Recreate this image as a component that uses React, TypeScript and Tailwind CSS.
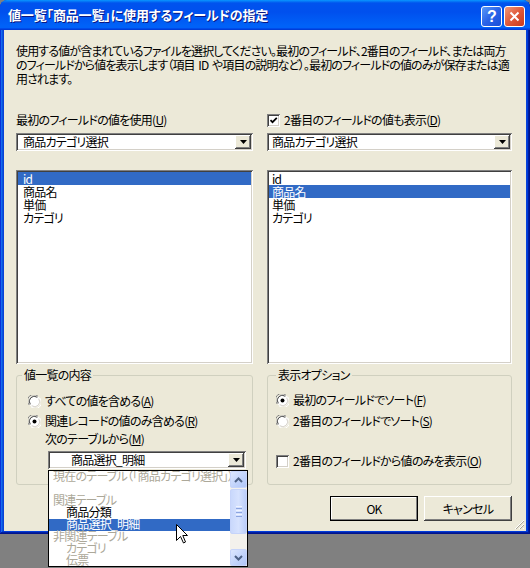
import React from "react";

const SUNKEN =
  "shadow-[inset_1px_1px_0_#808080,inset_-1px_-1px_0_#ffffff,inset_2px_2px_0_#404040,inset_-2px_-2px_0_#d4d0c8]";
const RAISED =
  "shadow-[inset_-1px_-1px_0_#404040,inset_1px_1px_0_#ffffff,inset_-2px_-2px_0_#808080,inset_2px_2px_0_#ece9d8]";

function DropBtn() {
  return (
    <div className={`mr-[2px] w-[16px] h-[14px] shrink-0 bg-[#ece9d8] ${RAISED} flex items-center justify-center`}>
      <svg width="7" height="4" viewBox="0 0 7 4">
        <path d="M0 0H7L3.5 4Z" fill="#000" />
      </svg>
    </div>
  );
}

function Combo({ text, padClass, className }: { text: string; padClass: string; className?: string }) {
  return (
    <div className={`h-[18px] bg-white flex items-center ${SUNKEN} ${className ?? ""}`}>
      <span className={`flex-1 ${padClass} text-[12px] leading-[14px] whitespace-nowrap`}>{text}</span>
      <DropBtn />
    </div>
  );
}

function ListBox({ items, sel, padClass }: { items: string[]; sel: number; padClass: string }) {
  return (
    <div className={`h-[194px] bg-white ${SUNKEN} p-[2px]`}>
      {items.map((it, i) => (
        <div
          key={it}
          className={`h-[13px] leading-[13px] text-[12px] whitespace-nowrap ${padClass} ${
            i === sel ? "bg-[#316ac5] text-white" : "text-black"
          }`}
        >
          {it}
        </div>
      ))}
    </div>
  );
}

function Radio({ checked }: { checked?: boolean }) {
  return (
    <svg width="13" height="13" viewBox="0 0 13 13" className="shrink-0">
      <circle cx="6.5" cy="6.5" r="6" fill="#ffffff" />
      <path d="M1.3 10 A6 6 0 0 1 10 1.3" fill="none" stroke="#808080" strokeWidth="1" />
      <path d="M2.3 9.3 A5 5 0 0 1 9.3 2.3" fill="none" stroke="#404040" strokeWidth="1" />
      <path d="M11.7 3 A6 6 0 0 1 3 11.7" fill="none" stroke="#ffffff" strokeWidth="1" />
      <path d="M10.7 3.7 A5 5 0 0 1 3.7 10.7" fill="none" stroke="#d4d0c8" strokeWidth="1" />
      {checked && <circle cx="6.5" cy="6.5" r="2" fill="#000000" />}
    </svg>
  );
}

function Check({ checked }: { checked?: boolean }) {
  return (
    <div className={`w-[13px] h-[13px] shrink-0 bg-white ${SUNKEN} flex items-center justify-center`}>
      {checked && (
        <svg width="9" height="9" viewBox="0 0 9 9">
          <path d="M1.5 4.2 L3.5 6.2 L7.8 1.8" fill="none" stroke="#000" strokeWidth="1.7" />
        </svg>
      )}
    </div>
  );
}

function UL({ k }: { k: string }) {
  return (
    <>
      (<span className="underline">{k}</span>)
    </>
  );
}

function Button({ children, def }: { children: React.ReactNode; def?: boolean }) {
  return (
    <div
      className={`w-[88px] h-[25px] bg-[#ece9d8] flex items-center justify-center text-[12px] ${
        def
          ? "border border-black shadow-[inset_-1px_-1px_0_#808080,inset_1px_1px_0_#ffffff]"
          : RAISED
      }`}
    >
      {children}
    </div>
  );
}

function TitleBar() {
  return (
    <div className="h-[30px] shrink-0 flex items-center rounded-t-[7px] bg-[linear-gradient(180deg,#0997ff_0%,#0053ee_10%,#0050ee_40%,#0062f8_85%,#0062f8_92%,#005bff_94%,#003dd7_96%,#003dd7_100%)]">
      <div className="pl-[8px] flex-1 text-white font-bold text-[13px] tracking-[-0.15px] whitespace-nowrap [text-shadow:1px_1px_0_#0a1883]">
        値一覧「商品一覧」に使用するフィールドの指定
      </div>
      <div className="flex gap-[2px] pr-[5px] pt-[3px]">
        <div className="w-[21px] h-[21px] rounded-[3px] border border-white bg-[linear-gradient(135deg,#5a9af8,#2a63e8_50%,#1a4ed8)] flex items-center justify-center text-white font-bold text-[16px] leading-none font-['Liberation_Sans',sans-serif]">
          ?
        </div>
        <div className="w-[21px] h-[21px] rounded-[3px] border border-white bg-[linear-gradient(135deg,#f09878,#e0593a_50%,#c8391b)] flex items-center justify-center">
          <svg width="11" height="11" viewBox="0 0 11 11">
            <path d="M1.5 1.5 L9.5 9.5 M9.5 1.5 L1.5 9.5" stroke="#ffffff" strokeWidth="2" />
          </svg>
        </div>
      </div>
    </div>
  );
}

function ScrollBtn({ up }: { up?: boolean }) {
  return (
    <div className="w-[17px] h-[17px] shrink-0 rounded-[2px] border border-[#c6d4fa] bg-[linear-gradient(135deg,#dde7fe,#c0d2fb_60%,#b0c6f7)] flex items-center justify-center">
      <svg width="9" height="6" viewBox="0 0 9 6">
        <path d={up ? "M1 5 L4.5 1.5 L8 5" : "M1 1 L4.5 4.5 L8 1"} fill="none" stroke="#4d6185" strokeWidth="2" />
      </svg>
    </div>
  );
}

function Popup() {
  const rows: { t: string; kind: "gray" | "grayIn" | "black" | "sel" | "blank" }[] = [
    { t: "現在のテーブル（「商品カテゴリ選択」）", kind: "gray" },
    { t: "", kind: "blank" },
    { t: "関連テーブル", kind: "gray" },
    { t: "商品分類", kind: "black" },
    { t: "商品選択_明細", kind: "sel" },
    { t: "非関連テーブル", kind: "gray" },
    { t: "カテゴリ", kind: "grayIn" },
    { t: "伝票", kind: "grayIn" },
  ];
  return (
    <div className="absolute left-[48px] top-[470px] w-[200px] h-[97px] bg-white border border-black flex">
      <div className="w-[181px] flex flex-col overflow-hidden">
        {rows.map((r, i) => (
          <div
            key={i}
            className={`h-[12px] shrink-0 leading-[10px] text-[12px] whitespace-nowrap ${
              r.kind === "gray"
                ? "pl-[4px] text-[#aca899]"
                : r.kind === "grayIn"
                ? "pl-[17px] text-[#aca899]"
                : r.kind === "black"
                ? "pl-[17px] text-black"
                : r.kind === "sel"
                ? "pl-[17px] text-white bg-[#316ac5]"
                : ""
            }`}
          >
            {r.t}
          </div>
        ))}
      </div>
      <div className="w-[17px] flex flex-col bg-[#f3f1ec]">
        <ScrollBtn up />
        <div className="mt-[1px] h-[45px] rounded-[2px] border border-[#c6d4fa] bg-[linear-gradient(90deg,#c9d8fc,#d6e2fe_50%,#bccefa)] flex flex-col items-center justify-center gap-[1px]">
          <div className="w-[6px] h-[1px] bg-[#eef3ff]" />
          <div className="w-[6px] h-[1px] bg-[#8ca5e0]" />
          <div className="w-[6px] h-[1px] bg-[#eef3ff]" />
          <div className="w-[6px] h-[1px] bg-[#8ca5e0]" />
          <div className="w-[6px] h-[1px] bg-[#eef3ff]" />
          <div className="w-[6px] h-[1px] bg-[#8ca5e0]" />
        </div>
        <div className="flex-1" />
        <ScrollBtn />
      </div>
    </div>
  );
}

export default function App() {
  return (
    <div className="w-[530px] h-[568px] bg-[#808080] overflow-hidden relative font-['Noto_Sans_CJK_JP','Noto_Sans',sans-serif] [font-feature-settings:'palt'] tracking-[-0.75px] text-black">
      <div className="w-[530px] h-[534px] flex flex-col rounded-t-[8px] bg-[#0842d8] shadow-[inset_-1px_-1px_0_#00138c,inset_1px_1px_0_#0831d9,inset_-2px_-2px_0_#001ea0,inset_2px_2px_0_#166aee,inset_-3px_-3px_0_#003bda,inset_3px_3px_0_#0855dd]">
        <TitleBar />
        <div className="flex-1 mx-[4px] mb-[3px] bg-[#ece9d8] relative flex flex-col pl-[12px] pr-[14px] text-[12px]">
          {/* description */}
          <div className="pt-[14px] leading-[14px] whitespace-pre tracking-[-0.87px]">
            <div>使用する値が含まれているファイルを選択してください。最初のフィールド、2番目のフィールド、または両方</div>
            <div>のフィールドから値を表示します（項目  ID  や項目の説明など）。最初のフィールドの値のみが保存または適</div>
            <div>用されます。</div>
          </div>

          {/* two columns */}
          <div className="mt-[27px] flex gap-[14px]">
            <div className="w-[237px] flex flex-col">
              <div className="h-[14px] leading-[14px] whitespace-nowrap">
                最初のフィールドの値を使用<UL k="U" />
              </div>
              <Combo text="商品カテゴリ選択" padClass="pl-[7px]" className="mt-[6px]" />
              <div className="mt-[19px]">
                <ListBox items={["id", "商品名", "単価", "カテゴリ"]} sel={0} padClass="pl-[5px]" />
              </div>
            </div>
            <div className="w-[245px] flex flex-col">
              <div className="h-[14px] flex items-center gap-[4px] whitespace-nowrap">
                <Check checked />
                <span className="leading-[14px]">
                  2番目のフィールドの値も表示<UL k="D" />
                </span>
              </div>
              <Combo text="商品カテゴリ選択" padClass="pl-[5px]" className="mt-[6px]" />
              <div className="mt-[19px]">
                <ListBox items={["id", "商品名", "単価", "カテゴリ"]} sel={1} padClass="pl-[3px]" />
              </div>
            </div>
          </div>

          {/* group boxes */}
          <div className="mt-[11px] flex gap-[14px]">
            <div className="relative w-[237px] h-[110px] border border-[#d0d0bf] rounded-[3px] flex flex-col">
              <span className="absolute left-[5px] top-[-8px] px-[2px] bg-[#ece9d8] leading-[14px] whitespace-nowrap">
                値一覧の内容
              </span>
              <div className="pt-[18px] pl-[11px] flex flex-col">
                <div className="h-[14px] flex items-center gap-[4px] whitespace-nowrap">
                  <Radio />
                  <span>
                    すべての値を含める<UL k="A" />
                  </span>
                </div>
                <div className="mt-[6px] h-[14px] flex items-center gap-[4px] whitespace-nowrap">
                  <Radio checked />
                  <span>
                    関連レコードの値のみ含める<UL k="R" />
                  </span>
                </div>
                <div className="mt-[4px] h-[14px] leading-[14px] pl-[17px] whitespace-nowrap">
                  次のテーブルから<UL k="M" />
                </div>
              </div>
              <Combo text="商品選択_明細" padClass="pl-[23px]" className="mt-[5px] ml-[31px] w-[198px]" />
            </div>
            <div className="relative w-[245px] h-[110px] border border-[#d0d0bf] rounded-[3px] flex flex-col">
              <span className="absolute left-[8px] top-[-8px] px-[2px] bg-[#ece9d8] leading-[14px] whitespace-nowrap">
                表示オプション
              </span>
              <div className="pt-[17px] pl-[8px] flex flex-col">
                <div className="h-[14px] flex items-center gap-[4px] whitespace-nowrap">
                  <Radio checked />
                  <span>
                    最初のフィールドでソート<UL k="F" />
                  </span>
                </div>
                <div className="mt-[7px] h-[14px] flex items-center gap-[4px] whitespace-nowrap">
                  <Radio />
                  <span>
                    2番目のフィールドでソート<UL k="S" />
                  </span>
                </div>
                <div className="mt-[26px] h-[14px] flex items-center gap-[4px] whitespace-nowrap">
                  <Check />
                  <span>
                    2番目のフィールドから値のみを表示<UL k="O" />
                  </span>
                </div>
              </div>
            </div>
          </div>

          {/* buttons */}
          <div className="mt-[11px] flex justify-end gap-[6px]">
            <Button def>OK</Button>
            <Button>キャンセル</Button>
          </div>

          {/* resize grip */}
          <svg width="12" height="12" viewBox="0 0 12 12" className="absolute right-[1px] bottom-[1px]">
            <path d="M11 2 L2 11 M11 6 L6 11 M11 10 L10 11" stroke="#ffffff" strokeWidth="1" />
            <path d="M11 3 L3 11 M11 7 L7 11" stroke="#aca899" strokeWidth="1" />
          </svg>
        </div>
      </div>

      <Popup />

      {/* cursor */}
      <svg width="13" height="21" viewBox="0 0 13 21" className="absolute left-[176px] top-[524px]">
        <path
          d="M0.5 0.5 L0.5 16.5 L4.5 12.5 L7.5 19 L9.5 18 L6.8 11.5 L11.5 11.5 Z"
          fill="#ffffff"
          stroke="#000000"
          strokeWidth="1"
          strokeLinejoin="miter"
        />
      </svg>
    </div>
  );
}
